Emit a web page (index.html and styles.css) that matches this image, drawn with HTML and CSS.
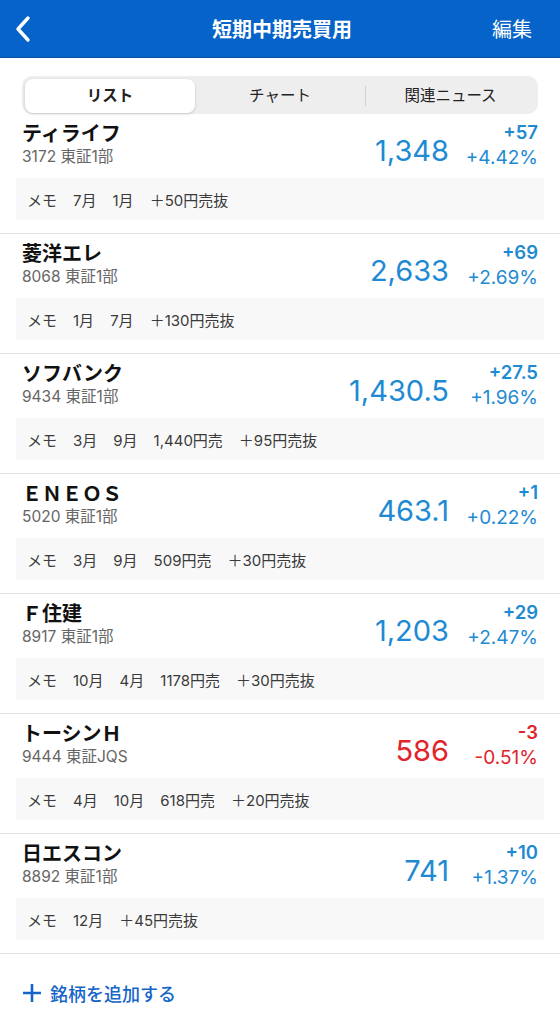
FILE: index.html
```html
<!DOCTYPE html>
<html lang="ja">
<head>
  <meta charset="UTF-8">
  <title>短期中期売買用</title>
  <link rel="stylesheet" href="styles.css">
</head>
<body>

  <header class="nav">
    <svg class="back" width="18" height="28" viewBox="0 0 18 28">
      <path d="M14 3 L4 14 L14 25" fill="none" stroke="#fff" stroke-width="3.4" stroke-linecap="round" stroke-linejoin="round"/>
    </svg>
    <h1>短期中期売買用</h1>
    <span class="edit">編集</span>
  </header>

  <div class="tabs">
    <span class="tab active">リスト</span>
    <span class="tab">チャート</span>
    <span class="tab sep">関連ニュース</span>
  </div>

  <ul class="list">
    <li class="item">
      <div class="top">
        <div class="info">
          <div class="name">ティライフ</div>
          <div class="code">3172 東証1部</div>
        </div>
        <div class="price up">1,348</div>
        <div class="change up">
          <div class="diff">+57</div>
          <div class="pct">+4.42%</div>
        </div>
      </div>
      <div class="memo"><span>メモ</span><span>7月</span><span>1月</span><span>＋50円売抜</span></div>
    </li>
    <li class="item">
      <div class="top">
        <div class="info">
          <div class="name">菱洋エレ</div>
          <div class="code">8068 東証1部</div>
        </div>
        <div class="price up">2,633</div>
        <div class="change up">
          <div class="diff">+69</div>
          <div class="pct">+2.69%</div>
        </div>
      </div>
      <div class="memo"><span>メモ</span><span>1月</span><span>7月</span><span>＋130円売抜</span></div>
    </li>
    <li class="item">
      <div class="top">
        <div class="info">
          <div class="name">ソフバンク</div>
          <div class="code">9434 東証1部</div>
        </div>
        <div class="price up">1,430.5</div>
        <div class="change up">
          <div class="diff">+27.5</div>
          <div class="pct">+1.96%</div>
        </div>
      </div>
      <div class="memo"><span>メモ</span><span>3月</span><span>9月</span><span>1,440円売</span><span>＋95円売抜</span></div>
    </li>
    <li class="item">
      <div class="top">
        <div class="info">
          <div class="name">ＥＮＥＯＳ</div>
          <div class="code">5020 東証1部</div>
        </div>
        <div class="price up">463.1</div>
        <div class="change up">
          <div class="diff">+1</div>
          <div class="pct">+0.22%</div>
        </div>
      </div>
      <div class="memo"><span>メモ</span><span>3月</span><span>9月</span><span>509円売</span><span>＋30円売抜</span></div>
    </li>
    <li class="item">
      <div class="top">
        <div class="info">
          <div class="name">Ｆ住建</div>
          <div class="code">8917 東証1部</div>
        </div>
        <div class="price up">1,203</div>
        <div class="change up">
          <div class="diff">+29</div>
          <div class="pct">+2.47%</div>
        </div>
      </div>
      <div class="memo"><span>メモ</span><span>10月</span><span>4月</span><span>1178円売</span><span>＋30円売抜</span></div>
    </li>
    <li class="item">
      <div class="top">
        <div class="info">
          <div class="name">トーシンＨ</div>
          <div class="code">9444 東証JQS</div>
        </div>
        <div class="price down">586</div>
        <div class="change down">
          <div class="diff">-3</div>
          <div class="pct">-0.51%</div>
        </div>
      </div>
      <div class="memo"><span>メモ</span><span>4月</span><span>10月</span><span>618円売</span><span>＋20円売抜</span></div>
    </li>
    <li class="item">
      <div class="top">
        <div class="info">
          <div class="name">日エスコン</div>
          <div class="code">8892 東証1部</div>
        </div>
        <div class="price up">741</div>
        <div class="change up">
          <div class="diff">+10</div>
          <div class="pct">+1.37%</div>
        </div>
      </div>
      <div class="memo"><span>メモ</span><span>12月</span><span>＋45円売抜</span></div>
    </li>
  </ul>

  <div class="add">
    <svg width="20" height="20" viewBox="0 0 20 20">
      <path d="M10 1 V19 M1 10 H19" stroke="#1565c8" stroke-width="2.6"/>
    </svg>
    <span>銘柄を追加する</span>
  </div>

</body>
</html>
```

FILE: styles.css
```css
body {
  margin: 0;
  width: 560px;
  height: 1024px;
  overflow: hidden;
  background: #fff;
  font-family: Inter, "Noto Sans CJK JP", sans-serif;
  color: #111;
}
.nav {
  height: 57px;
  background: #0563c9;
  border-bottom: 1px solid #0a4fa0;
  display: flex;
  align-items: center;
  justify-content: space-between;
  padding: 0 28px 0 14px;
  color: #fff;
}
.nav h1 {
  margin: 0;
  font-size: 20px;
  font-weight: 700;
  padding-left: 40px;
}
.edit {
  font-size: 20px;
}
.back {
  display: block;
}
.tabs {
  margin: 18px 22px 0;
  height: 38px;
  padding: 3px;
  box-sizing: border-box;
  background: #eeeeef;
  border-radius: 10px;
  display: grid;
  grid-template-columns: 1fr 1fr 1fr;
}
.tab {
  display: flex;
  align-items: center;
  justify-content: center;
  font-size: 15.5px;
  line-height: 20px;
  padding-bottom: 1px;
  color: #222;
  border-radius: 8px;
}
.tab.active {
  background: #fff;
  font-weight: 700;
  box-shadow: 0 1px 3px rgba(0, 0, 0, 0.18);
}
.tab.sep {
  border-left: 1px solid #cfcfd2;
  border-radius: 0;
  margin: 7px 0;
  padding-bottom: 0;
}
.list {
  list-style: none;
  margin: 0;
  padding: 0;
}
.item {
  height: 120px;
  box-sizing: border-box;
  border-bottom: 1px solid #e2e2e4;
  padding: 4px 16px 0;
}
.top {
  display: flex;
  align-items: flex-start;
  padding: 0 6px;
  height: 60px;
}
.info {
  flex: 1;
  padding-top: 3px;
}
.name {
  font-size: 20px;
  font-weight: 600;
  line-height: 26px;
}
.code {
  font-size: 15.5px;
  color: #666;
  line-height: 20px;
}
.price {
  font-size: 29px;
  line-height: 34px;
  margin-top: 16px;
}
.change {
  width: 89px;
  text-align: right;
  padding-top: 1px;
}
.diff {
  font-size: 18.5px;
  font-weight: 600;
  line-height: 26px;
}
.pct {
  font-size: 19px;
  line-height: 26px;
}
.up {
  color: #1e8ad3;
}
.down {
  color: #e0242a;
}
.memo {
  height: 42px;
  background: #f8f8f8;
  display: flex;
  align-items: center;
  gap: 16px;
  padding: 0 11px;
  font-size: 15px;
  color: #3a3a3a;
}
.add {
  display: flex;
  align-items: center;
  gap: 8px;
  padding: 26px 22px 0;
  font-size: 18px;
  font-weight: 500;
  color: #1565c8;
}
```
